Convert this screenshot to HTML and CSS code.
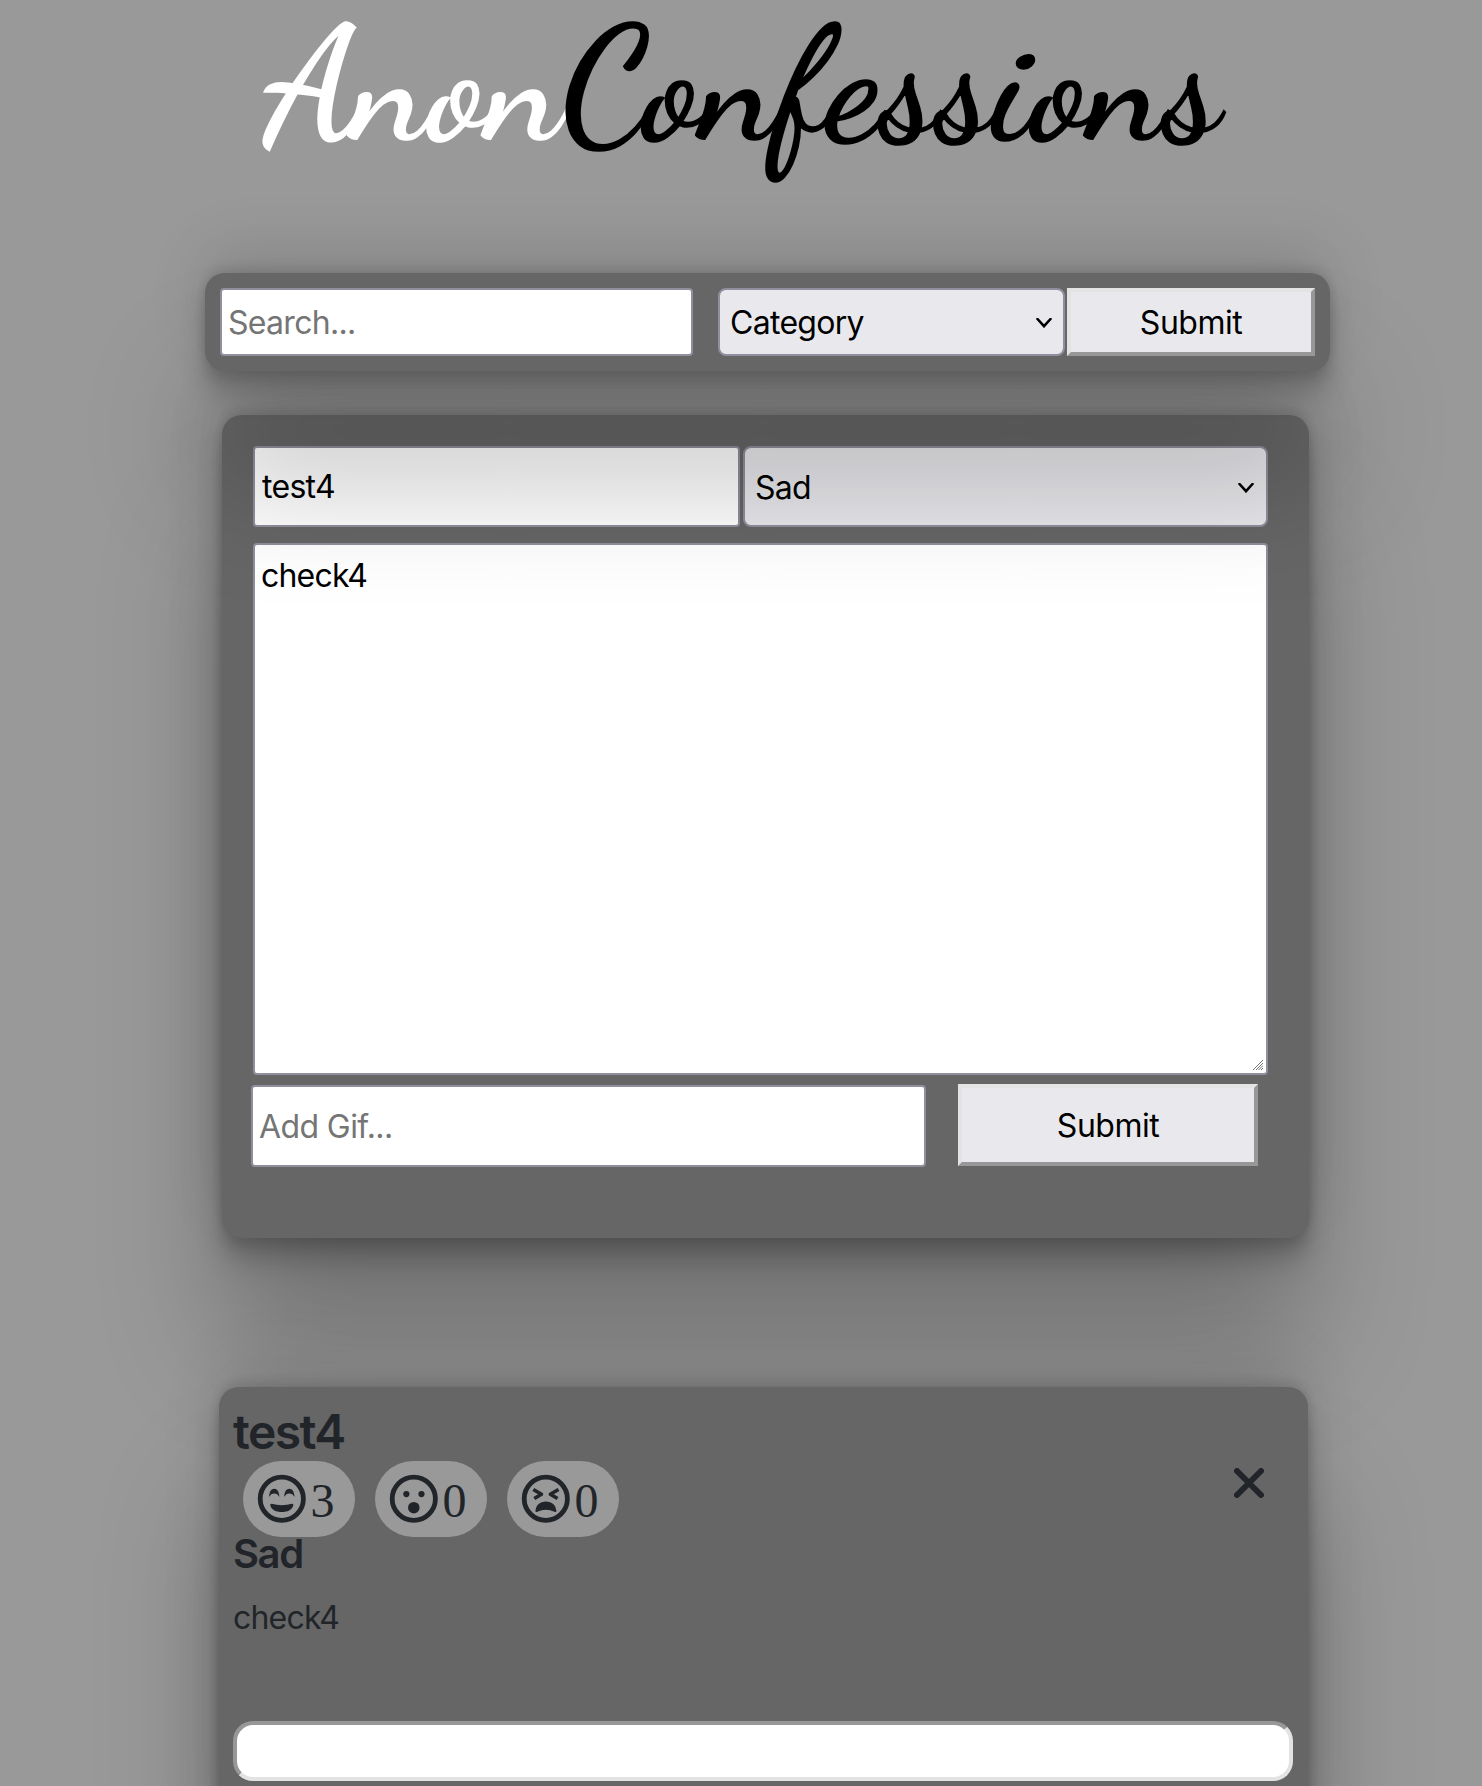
FILE: index.html
```html
<!DOCTYPE html>
<html lang="en">
<head>
<meta charset="utf-8">
<title>AnonConfessions</title>
<link rel="stylesheet" href="styles.css">
</head>
<body>
<header class="logo"><span class="logo-light">Anon</span><span>Confessions</span></header>

<form class="card search-bar">
  <input class="field search-input" type="text" placeholder="Search..." aria-label="Search">
  <div class="select-wrap search-category">
    <select class="field select" aria-label="Category"><option>Category</option></select>
    <svg class="chevron" viewBox="0 0 16 10"><path d="M1.5 1 8 8.2 14.500 1"/></svg>
  </div>
  <button class="button search-submit" type="button">Submit</button>
</form>

<form class="card post-form">
  <div class="row">
    <input class="field title-input" type="text" value="test4" aria-label="Title">
    <div class="select-wrap mood">
      <select class="field select" aria-label="Mood"><option>Sad</option></select>
      <svg class="chevron" viewBox="0 0 16 10"><path d="M1.5 1 8 8.2 14.500 1"/></svg>
    </div>
  </div>
  <div class="message-wrap">
    <textarea class="field message" aria-label="Confession">check4</textarea>
    <svg class="grip" viewBox="0 0 10 10"><path d="M0 10 10 0M3 10 10 3M5.500 10 10 5.500M8 10 10 8"/></svg>
  </div>
  <div class="row gif-row">
    <input class="field gif-input" type="text" placeholder="Add Gif..." aria-label="Gif">
    <button class="button form-submit" type="button">Submit</button>
  </div>
</form>

<article class="card post">
  <div class="post-head">
    <div>
      <h2 class="post-title">test4</h2>
      <div class="reactions">
        <span class="pill">
          <svg class="face" viewBox="0 0 24 24"><circle class="ring" cx="12" cy="12" r="9"/><path d="M6.700 11.200C6.800 9 7.600 7.800 8.850 7.800s2.050 1.200 2.150 3.400c-.6-.9-1.200-1.400-2.150-1.400s-1.550.5-2.150 1.400zM13 11.200c.1-2.200.9-3.400 2.150-3.400s2.050 1.200 2.150 3.400c-.6-.9-1.200-1.400-2.150-1.400s-1.550.5-2.150 1.400zM7.700 14.100Q12 15.200 16.300 14.100q.7 0 .5.700C16.200 16.700 14.400 17.500 12 17.500S7.800 16.700 7.200 14.800q-.2-.7.5-.7z"/></svg>
          <span>3</span>
        </span>
        <span class="pill">
          <svg class="face" viewBox="0 0 24 24"><circle class="ring" cx="12" cy="12" r="9"/><circle cx="8.900" cy="10.050" r="1.300"/><circle cx="15.200" cy="10.050" r="1.300"/><circle cx="12" cy="15.700" r="2.400"/></svg>
          <span>0</span>
        </span>
        <span class="pill">
          <svg class="face" viewBox="0 0 24 24"><circle class="ring" cx="12" cy="12" r="9"/><path class="line" d="M6.800 8.100 10.200 10.100 7.200 11.900M17.300 8.100 13.900 10.100 16.900 11.900"/><path d="M7.700 16.900C8 14.600 9.500 13.100 12.050 13.100s4.050 1.500 4.350 3.800c.1.600-.4.800-.8.500Q12.050 15.700 8.500 17.400c-.4.300-.9.100-.8-.5z"/></svg>
          <span>0</span>
        </span>
      </div>
      <h3 class="post-mood">Sad</h3>
      <p class="post-text">check4</p>
    </div>
    <svg class="close" viewBox="0 0 30 30"><path d="M3 3 27 27M27 3 3 27"/></svg>
  </div>
  <input class="comment" type="text" aria-label="Comment">
</article>
</body>
</html>
```

FILE: styles.css
```css
* { box-sizing: border-box; }

html { background: #999; }

body {
  margin: 0;
  height: 1786px;
  overflow: hidden;
  display: flex;
  flex-direction: column;
  align-items: flex-start;
  background: #999;
  color: #212529;
  font-family: "Inter", "Noto Sans", sans-serif;
  font-size: 32px;
}

.logo {
  height: 273px;
  flex: none;
  padding-left: 265px;
  color: #000;
  font: 500 160px/173px "Dancing Script", cursive;
  -webkit-text-stroke: 1.6px currentColor;
  white-space: nowrap;
}

.logo-light { color: #fff; }

.card {
  flex: none;
  background: #666;
  border-radius: 20px;
  box-shadow:
    0 108px 120px rgba(0, 0, 0, .25),
    0 -24px 60px rgba(0, 0, 0, .12),
    0 8px 12px rgba(0, 0, 0, .12),
    0 24px 26px rgba(0, 0, 0, .17),
    0 -6px 10px rgba(0, 0, 0, .09);
}

.field {
  display: block;
  margin: 0;
  border: 2px solid #8f8f9d;
  border-radius: 4px;
  background: #fff;
  color: #000;
  font: inherit;
  letter-spacing: -.7px;
  padding: 0 6px;
  outline: 0;
}

.field::placeholder { color: #757575; opacity: 1; }

.select-wrap { position: relative; }

.select {
  appearance: none;
  width: 100%;
  height: 100%;
  padding: 1px 10px 0;
  border-radius: 8px;
  background: #e9e9ed;
}

.chevron {
  position: absolute;
  right: 13px;
  top: 50%;
  width: 16px;
  height: 10px;
  margin-top: -4px;
  fill: none;
  stroke: #000;
  stroke-width: 2.6;
  stroke-linecap: round;
}

.button {
  margin: 0;
  padding: 0;
  border: 4px solid;
  border-color: #e3e3e3 #979797 #979797 #e3e3e3;
  background: #e9e9ed;
  color: #000;
  font: inherit;
  letter-spacing: -.5px;
}

.search-bar {
  position: relative;
  z-index: 1;
  display: flex;
  width: 1125px;
  height: 98px;
  margin-left: 205px;
  padding: 15px;
}

.search-input { width: 473px; }
.search-category { width: 347px; margin-left: 25px; }
.search-submit { width: 248px; margin-left: 2px; }

.post-form {
  width: 1087px;
  height: 823px;
  margin: 44px 0 0 222px;
  padding: 31px;
}

.row { display: flex; }
.title-input { width: 487px; height: 81px; padding-left: 7px; }
.mood { width: 525px; height: 81px; margin-left: 3px; }
.mood .chevron { right: 14px; }

.message-wrap {
  position: relative;
  width: 1015px;
  height: 532px;
  margin-top: 16px;
}

.message {
  width: 100%;
  height: 100%;
  padding: 10px 6px;
  line-height: 42px;
  letter-spacing: -.8px;
  resize: none;
}

.grip {
  position: absolute;
  right: 5px;
  bottom: 5px;
  width: 10px;
  height: 10px;
  fill: none;
  stroke: #777;
  stroke-width: 1;
}

.gif-row { margin: 9px 0 0 -2px; }
.gif-input { width: 675px; height: 82px; margin-top: 1px; letter-spacing: -.6px; }
.form-submit { width: 300px; height: 82px; margin-left: 32px; }

.post {
  width: 1089px;
  height: 460px;
  margin: 149px 0 0 219px;
  padding: 16px 14px;
}

.post-head {
  display: flex;
  justify-content: space-between;
  height: 318px;
}

.post-title {
  margin: 0;
  font-size: 48px;
  line-height: 58px;
  font-weight: 600;
  letter-spacing: -1.6px;
}

.reactions {
  display: flex;
  gap: 20px;
  padding-left: 10px;
}

.pill {
  display: flex;
  align-items: center;
  width: 112px;
  height: 76px;
  padding-left: 10px;
  border-radius: 38px;
  background: #999;
  font: 48px/76px "Liberation Serif", serif;
}

.pill span { padding-top: 3px; }

.face {
  width: 57.6px;
  height: 57.6px;
  fill: #212529;
}

.ring {
  fill: none;
  stroke: #212529;
  stroke-width: 2;
}

.line {
  fill: none;
  stroke: #212529;
  stroke-width: 1.5;
  stroke-linejoin: round;
  stroke-linecap: butt;
}

.post-mood {
  margin: 0;
  font-size: 40px;
  line-height: 34px;
  font-weight: 600;
  letter-spacing: -1.4px;
}

.post-text {
  margin: 23px 0 0;
  line-height: 48px;
  letter-spacing: -.8px;
}

.close {
  width: 30px;
  height: 30px;
  margin: 65px 30px 0 0;
  fill: none;
  stroke: #212529;
  stroke-width: 6;
  stroke-linecap: round;
}

.comment {
  display: block;
  width: 1060px;
  height: 60px;
  border: 4px solid;
  border-color: #979797 #e3e3e3 #e3e3e3 #979797;
  border-radius: 20px;
  background: #fff;
  outline: 0;
}
```
